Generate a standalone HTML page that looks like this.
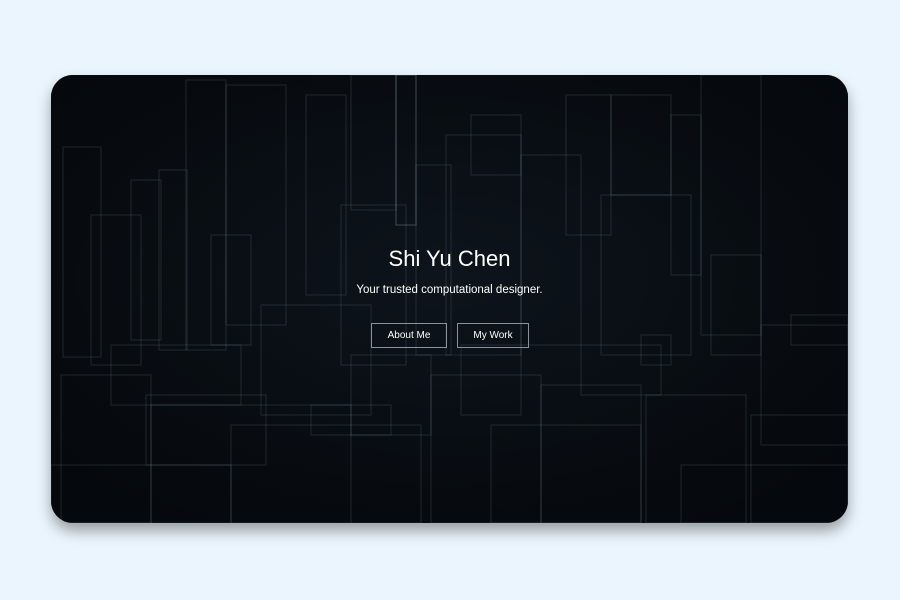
<!DOCTYPE html>
<html><head><style>
html,body{margin:0;padding:0;background:#eaf5fd;width:900px;height:600px;overflow:hidden;font-family:"Liberation Sans",sans-serif}
.card{position:absolute;left:51px;top:75px;width:797px;height:448px;border-radius:22px;overflow:hidden;background:#080c11;box-shadow:0 8px 14px rgba(0,0,0,.35)}
svg{position:absolute;left:0;top:0}
.t{position:absolute;left:0;width:797px;text-align:center;color:#fff}
.btn{position:absolute;top:248px;height:25px;border:1px solid #8a939a;color:#fff;font-size:10px;line-height:23px;text-align:center;box-sizing:border-box}
</style></head><body>
<div class="card">
<svg width="797" height="448" fill="none" stroke="rgba(150,180,190,0.17)" stroke-width="1">
<defs><radialGradient id="g" cx="50%" cy="45%" r="65%"><stop offset="0" stop-color="#0d141b"/><stop offset="1" stop-color="#05080c"/></radialGradient></defs>
<rect x="0" y="0" width="797" height="448" fill="url(#g)" stroke="none"/>
<rect x="12" y="72" width="38" height="210"/><rect x="40" y="140" width="50" height="150"/><rect x="80" y="105" width="30" height="160"/><rect x="108" y="95" width="28" height="180"/>
<rect x="135" y="5" width="40" height="270"/><rect x="175" y="10" width="60" height="240"/><rect x="160" y="160" width="40" height="110"/>
<rect x="255" y="20" width="40" height="200"/><rect x="290" y="130" width="65" height="160"/><rect x="300" y="0" width="45" height="135"/>
<rect x="345" y="0" width="20" height="150" stroke="rgba(190,210,220,0.3)"/>
<rect x="365" y="90" width="35" height="190"/><rect x="395" y="60" width="75" height="220"/><rect x="420" y="40" width="50" height="60"/>
<rect x="470" y="80" width="60" height="190"/><rect x="515" y="20" width="45" height="140"/><rect x="560" y="20" width="60" height="100"/>
<rect x="550" y="120" width="90" height="160"/><rect x="620" y="40" width="30" height="160"/><rect x="650" y="0" width="60" height="260"/>
<rect x="660" y="180" width="50" height="100"/><rect x="710" y="250" width="87" height="120"/><rect x="740" y="240" width="57" height="30"/>
<rect x="10" y="300" width="90" height="148"/><rect x="60" y="270" width="130" height="60"/><rect x="95" y="320" width="120" height="70"/>
<rect x="100" y="330" width="200" height="120"/><rect x="210" y="230" width="110" height="110"/><rect x="300" y="280" width="80" height="80"/>
<rect x="380" y="300" width="110" height="148"/><rect x="410" y="270" width="60" height="70"/><rect x="490" y="310" width="100" height="138"/>
<rect x="595" y="320" width="100" height="128"/><rect x="700" y="340" width="97" height="108"/><rect x="630" y="390" width="167" height="58"/>
<rect x="0" y="390" width="180" height="58"/><rect x="180" y="350" width="190" height="98"/><rect x="260" y="330" width="80" height="30"/>
<rect x="440" y="350" width="150" height="98"/><rect x="530" y="270" width="80" height="50"/><rect x="590" y="260" width="30" height="30"/>
</svg>
<div class="t" style="top:171px;font-size:22px">Shi Yu Chen</div>
<div class="t" style="top:209px;font-size:11.5px">Your trusted computational designer.</div>
<div class="btn" style="left:320px;width:76px">About Me</div>
<div class="btn" style="left:406px;width:72px">My Work</div>
</div>
</body></html>
